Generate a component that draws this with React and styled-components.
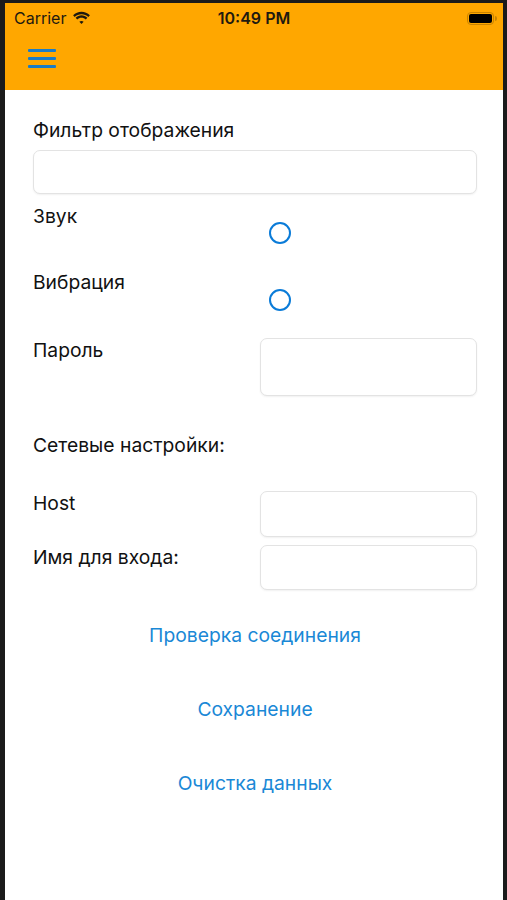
import styled, { createGlobalStyle } from "styled-components"

const GlobalStyle = createGlobalStyle`
  html, body {
    margin: 0;
    padding: 0;
    background: #1b1b1b;
  }
  * {
    box-sizing: border-box;
  }
`

const Frame = styled.div`
  width: 507px;
  height: 900px;
  padding: 3px 4px 0 5px;
  background: #1b1b1b;
  overflow: hidden;
`

const Screen = styled.div`
  height: 100%;
  background: #fff;
  display: flex;
  flex-direction: column;
  font-family: Inter, "Noto Sans", sans-serif;
`

const Header = styled.div`
  background: #ffa700;
  height: 87px;
  display: flex;
  flex-direction: column;
`

const StatusBar = styled.div`
  height: 30px;
  display: flex;
  align-items: center;
  padding: 0 9px 0 9px;
  font-size: 16px;
  color: #1e1a10;
  position: relative;
`

const Carrier = styled.div`
  display: flex;
  align-items: center;
  gap: 6px;
`

const Time = styled.div`
  position: absolute;
  left: 0;
  right: 0;
  text-align: center;
  font-weight: 600;
  pointer-events: none;
`

const Battery = styled.div`
  margin-left: auto;
  width: 27px;
  height: 13px;
  border-radius: 4px;
  border: 1px solid #c98300;
  padding: 1px;
  position: relative;

  &::before {
    content: "";
    display: block;
    height: 100%;
    border-radius: 2px;
    background: #000;
  }

  &::after {
    content: "";
    position: absolute;
    right: -4px;
    top: 3px;
    width: 2px;
    height: 5px;
    border-radius: 0 2px 2px 0;
    background: #c98300;
  }
`

const NavBar = styled.div`
  flex: 1;
  display: flex;
  align-items: center;
  padding: 0 0 6px 23px;
`

const Burger = styled.div`
  display: flex;
  flex-direction: column;
  gap: 5px;
  width: 28px;

  span {
    display: block;
    height: 3px;
    border-radius: 1px;
    background: #1a7cc6;
  }
`

const Content = styled.div`
  display: flex;
  flex-direction: column;
  padding: 0 26px 0 28px;
`

const Label = styled.div`
  font-size: 19.3px;
  line-height: 22px;
  color: #111;
  margin-top: ${({ $top }) => $top || 0}px;
  padding-top: ${({ $pad }) => $pad || 0}px;
`

const Input = styled.div`
  height: ${({ $h }) => $h}px;
  margin-top: ${({ $top }) => $top || 0}px;
  border: 1px solid #e3e3e3;
  border-radius: 7px;
  box-shadow: 0 1px 2px rgba(0, 0, 0, 0.06);
  background: #fff;
`

const Row = styled.div`
  display: grid;
  grid-template-columns: 227px 1fr;
  align-items: start;
  margin-top: ${({ $top }) => $top}px;
`

const Radio = styled.div`
  width: 22px;
  height: 22px;
  margin: ${({ $top }) => $top}px 0 0 9px;
  border-radius: 50%;
  border: 2.5px solid #0a7bd8;
`

const Actions = styled.div`
  display: flex;
  flex-direction: column;
  align-items: center;
  gap: 52px;
  margin-top: 34px;
`

const LinkButton = styled.div`
  font-size: 19.3px;
  line-height: 22px;
  color: #1a88d6;
`

const Wifi = () => (
  <svg width="19" height="14" viewBox="0 0 19 14">
    <path d="M9.5 3.2c2.6 0 5 1 6.8 2.7l1.6-1.7C15.6 2 12.7.8 9.5.8S3.4 2 1.1 4.2l1.6 1.7C4.5 4.2 6.9 3.2 9.5 3.2z" fill="#1e1a10" />
    <path d="M9.5 6.7c1.6 0 3.1.6 4.3 1.7l1.6-1.7C13.8 5.2 11.7 4.3 9.5 4.3S5.2 5.2 3.6 6.7l1.6 1.7c1.2-1.1 2.7-1.7 4.3-1.7z" fill="#1e1a10" />
    <path d="M9.5 9.9c.8 0 1.5.3 2.1.8L9.5 13 7.4 10.7c.6-.5 1.3-.8 2.1-.8z" fill="#1e1a10" />
  </svg>
)

export default function App() {
  return (
    <>
      <GlobalStyle />
      <Frame>
        <Screen>
          <Header>
            <StatusBar>
              <Carrier>
                Carrier <Wifi />
              </Carrier>
              <Time>10:49 PM</Time>
              <Battery />
            </StatusBar>
            <NavBar>
              <Burger>
                <span />
                <span />
                <span />
              </Burger>
            </NavBar>
          </Header>
          <Content>
            <Label $top={29}>Фильтр отображения</Label>
            <Input $h={44} $top={9} />

            <Row $top={11}>
              <Label>Звук</Label>
              <Radio $top={17} />
            </Row>
            <Row $top={27}>
              <Label>Вибрация</Label>
              <Radio $top={18} />
            </Row>
            <Row $top={27}>
              <Label $pad={1}>Пароль</Label>
              <Input $h={58} />
            </Row>

            <Label $top={38}>Сетевые настройки:</Label>

            <Row $top={35}>
              <Label $pad={1}>Host</Label>
              <Input $h={46} />
            </Row>
            <Row $top={8}>
              <Label $pad={1}>Имя для входа:</Label>
              <Input $h={45} />
            </Row>

            <Actions>
              <LinkButton>Проверка соединения</LinkButton>
              <LinkButton>Сохранение</LinkButton>
              <LinkButton>Очистка данных</LinkButton>
            </Actions>
          </Content>
        </Screen>
      </Frame>
    </>
  )
}
